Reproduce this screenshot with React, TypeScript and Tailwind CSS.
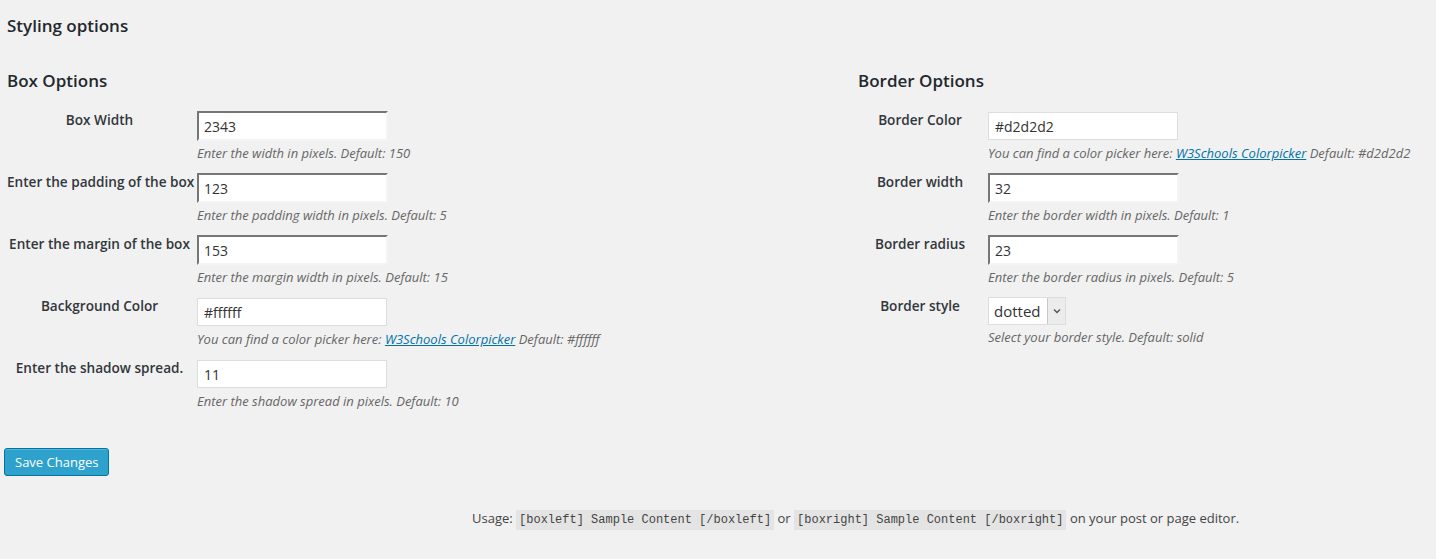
import React from "react";

const font = { fontFamily: '"Open Sans", "Noto Sans", sans-serif' };

type Row = {
  label: string;
  value: string;
  inset?: boolean;
  desc: React.ReactNode;
  select?: boolean;
};

function Link() {
  return (
    <a href="#" className="text-[#0073aa] underline">
      W3Schools Colorpicker
    </a>
  );
}

function TextInput({ value, inset }: { value: string; inset?: boolean }) {
  if (inset) {
    return (
      <div className="w-[191px] h-[30px] bg-white border-2 border-t-[#767676] border-l-[#767676] border-r-[#f4f4f4] border-b-[#f4f4f4] pl-[5px] flex items-center text-[14px] text-[#333]">
        {value}
      </div>
    );
  }
  return (
    <div className="my-[1px] w-[190px] h-[28px] bg-white border border-[#dddddd] pl-[6px] flex items-center text-[14px] text-[#333]">
      {value}
    </div>
  );
}

function SelectBox({ value }: { value: string }) {
  return (
    <div className="w-[78px] h-[28px] bg-white border border-[#dddddd] flex items-stretch text-[15px] text-[#333]">
      <div className="flex-1 flex items-center pl-[5px]">{value}</div>
      <div className="w-[18px] bg-[#ececec] border-l border-[#c8c8c8] flex items-center justify-center">
        <svg width="8" height="6" viewBox="0 0 8 6">
          <path d="M1 1.5 L4 4.5 L7 1.5" fill="none" stroke="#555" strokeWidth="1.4" />
        </svg>
      </div>
    </div>
  );
}

function FormRows({ rows, labelW, gap }: { rows: Row[]; labelW: string; gap: string }) {
  return (
    <div className="flex flex-col">
      {rows.map((r) => (
        <div key={r.label} className="flex pb-[11px]">
          <div
            className={`${labelW} ${gap} shrink-0 whitespace-nowrap text-center text-[13.6px] font-semibold leading-[17px] text-[#32373c]`}
          >
            {r.label}
          </div>
          <div className="flex flex-col">
            {r.select ? <SelectBox value={r.value} /> : <TextInput value={r.value} inset={r.inset} />}
            <div className="mt-[3px] text-[13px] leading-[18px] italic text-[#666]">{r.desc}</div>
          </div>
        </div>
      ))}
    </div>
  );
}

export default function App() {
  const left: Row[] = [
    { label: "Box Width", value: "2343", inset: true, desc: "Enter the width in pixels. Default: 150" },
    { label: "Enter the padding of the box", value: "123", inset: true, desc: "Enter the padding width in pixels. Default: 5" },
    { label: "Enter the margin of the box", value: "153", inset: true, desc: "Enter the margin width in pixels. Default: 15" },
    {
      label: "Background Color",
      value: "#ffffff",
      desc: (
        <>
          You can find a color picker here: <Link /> Default: #ffffff
        </>
      ),
    },
    { label: "Enter the shadow spread.", value: "11", desc: "Enter the shadow spread in pixels. Default: 10" },
  ];
  const right: Row[] = [
    {
      label: "Border Color",
      value: "#d2d2d2",
      desc: (
        <>
          You can find a color picker here: <Link /> Default: #d2d2d2
        </>
      ),
    },
    { label: "Border width", value: "32", inset: true, desc: "Enter the border width in pixels. Default: 1" },
    { label: "Border radius", value: "23", inset: true, desc: "Enter the border radius in pixels. Default: 5" },
    { label: "Border style", value: "dotted", select: true, desc: "Select your border style. Default: solid" },
  ];

  const mono = { fontFamily: '"Liberation Mono", monospace' };

  return (
    <div className="min-h-[559px] w-full bg-[#f1f1f1] text-[#444]" style={font}>
      <div className="pl-[7px] pt-[14px]">
        <h2 className="text-[17px] font-semibold leading-[24px] text-[#23282d]">Styling options</h2>
        <div className="flex mt-[31px]">
          <div className="w-[851px]">
            <h3 className="text-[17px] font-semibold leading-[24px] text-[#23282d] mb-[18px]">Box Options</h3>
            <FormRows rows={left} labelW="w-[185px]" gap="mr-[5px]" />
          </div>
          <div>
            <h3 className="text-[17px] font-semibold leading-[24px] text-[#23282d] mb-[18px]">Border Options</h3>
            <FormRows rows={right} labelW="w-[124px]" gap="mr-[6px]" />
          </div>
        </div>
      </div>
      <div className="pl-[4px] mt-[27px]">
        <button className="h-[28px] px-[10px] rounded-[3px] bg-[#2ea2cc] border border-[#0074a2] text-white text-[13px] leading-[26px] shadow-[inset_0_1px_0_rgba(120,200,230,0.5)]">
          Save Changes
        </button>
      </div>
      <div className="pl-[472px] mt-[31px] text-[13px] text-[#444] leading-[22px] whitespace-nowrap">
        Usage:{" "}
        <code className="bg-[#e4e4e4] px-[3px] py-[3px] text-[12px]" style={mono}>
          [boxleft] Sample Content [/boxleft]
        </code>{" "}
        or{" "}
        <code className="bg-[#e4e4e4] px-[3px] py-[3px] text-[12px]" style={mono}>
          [boxright] Sample Content [/boxright]
        </code>{" "}
        on your post or page editor.
      </div>
    </div>
  );
}
